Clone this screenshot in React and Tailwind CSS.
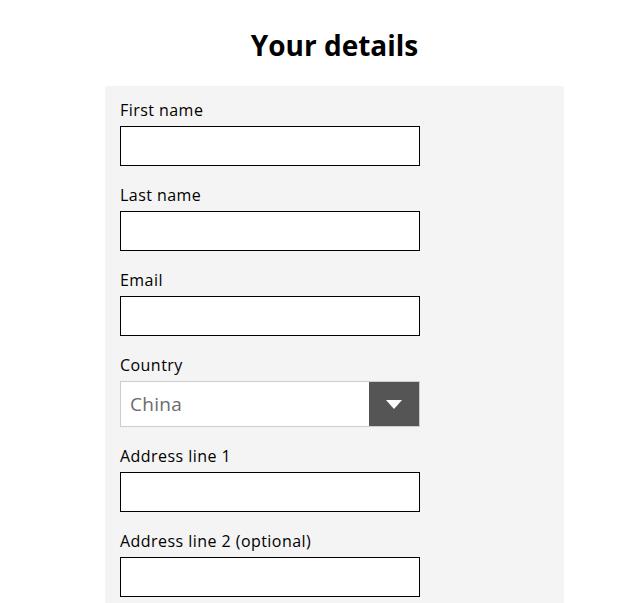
const fields = [
  { label: "First name" },
  { label: "Last name" },
  { label: "Email" },
  { label: "Country", select: "China" },
  { label: "Address line 1" },
  { label: "Address line 2 (optional)" },
];

function Field({ label, select }) {
  return (
    <div className="flex flex-col">
      <label className="text-[16px] leading-[16px] tracking-[0.45px] text-black mb-[8px]">{label}</label>
      {select ? (
        <div className="flex w-[300px] h-[46px] border border-[#cccccc] bg-white">
          <div className="flex-1 flex items-center pl-[9px] text-[19px] tracking-[0.3px] text-[#6b6b6b]">{select}</div>
          <div className="w-[50px] bg-[#555555] flex items-center justify-center">
            <svg width="16" height="9" viewBox="0 0 16 9">
              <path d="M0 0 L16 0 L8 9 Z" fill="#ffffff" />
            </svg>
          </div>
        </div>
      ) : (
        <input type="text" className="w-[300px] h-[40px] border border-black bg-white outline-none" />
      )}
    </div>
  );
}

export default function App() {
  return (
    <div className="min-h-screen bg-white" style={{ fontFamily: '"Open Sans", sans-serif' }}>
      <div className="ml-[105px] w-[459px] pt-[28px]">
        <h1 className="text-center text-[28px] leading-[34px] font-bold text-black mb-[24px]">Your details</h1>
        <div className="bg-[#f4f4f4] px-[15px] pt-[16px] pb-[20px] flex flex-col gap-[21px]">
          {fields.map((f) => (
            <Field key={f.label} {...f} />
          ))}
        </div>
      </div>
    </div>
  );
}
